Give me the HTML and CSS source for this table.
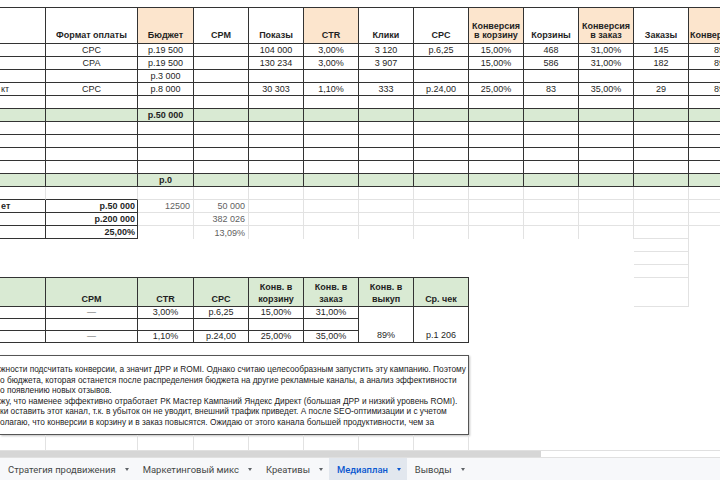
FILE: index.html
```html
<!DOCTYPE html>
<html lang="ru">
<head>
<meta charset="utf-8">
<title>Медиаплан</title>
<link rel="stylesheet" href="styles.css">
</head>
<body>
<div class="sheet">
  <div class="cols t1">
    <div class="c hd"></div>
    <div class="c hd"><span>Формат оплаты</span></div>
    <div class="c hd or"><span>Бюджет</span></div>
    <div class="c hd"><span>CPM</span></div>
    <div class="c hd"><span>Показы</span></div>
    <div class="c hd or"><span>CTR</span></div>
    <div class="c hd"><span>Клики</span></div>
    <div class="c hd"><span>CPC</span></div>
    <div class="c hd or"><span>Конверсия<br>в корзину</span></div>
    <div class="c hd"><span>Корзины</span></div>
    <div class="c hd or"><span>Конверсия<br>в заказ</span></div>
    <div class="c hd"><span>Заказы</span></div>
    <div class="c hd or lt"><span>Конверсия в выкуп</span></div>

    <div class="c"></div><div class="c">CPC</div><div class="c">р.19 500</div><div class="c"></div><div class="c">104 000</div><div class="c">3,00%</div><div class="c">3 120</div><div class="c">р.6,25</div><div class="c">15,00%</div><div class="c">468</div><div class="c">31,00%</div><div class="c">145</div><div class="c p89">89,00%</div>

    <div class="c"></div><div class="c">CPA</div><div class="c">р.19 500</div><div class="c"></div><div class="c">130 234</div><div class="c">3,00%</div><div class="c">3 907</div><div class="c"></div><div class="c">15,00%</div><div class="c">586</div><div class="c">31,00%</div><div class="c">182</div><div class="c p89">89,00%</div>

    <div class="c"></div><div class="c"></div><div class="c">р.3 000</div><div class="c"></div><div class="c"></div><div class="c"></div><div class="c"></div><div class="c"></div><div class="c"></div><div class="c"></div><div class="c"></div><div class="c"></div><div class="c"></div>

    <div class="c lt">кт</div><div class="c">CPC</div><div class="c">р.8 000</div><div class="c"></div><div class="c">30 303</div><div class="c">1,10%</div><div class="c">333</div><div class="c">р.24,00</div><div class="c">25,00%</div><div class="c">83</div><div class="c">35,00%</div><div class="c">29</div><div class="c p89">89,00%</div>

    <div class="c"></div><div class="c"></div><div class="c"></div><div class="c"></div><div class="c"></div><div class="c"></div><div class="c"></div><div class="c"></div><div class="c"></div><div class="c"></div><div class="c"></div><div class="c"></div><div class="c"></div>

    <div class="c gr"></div><div class="c gr"></div><div class="c gr b">р.50 000</div><div class="c gr"></div><div class="c gr"></div><div class="c gr"></div><div class="c gr"></div><div class="c gr"></div><div class="c gr"></div><div class="c gr"></div><div class="c gr"></div><div class="c gr"></div><div class="c gr"></div>

    <div class="c"></div><div class="c"></div><div class="c"></div><div class="c"></div><div class="c"></div><div class="c"></div><div class="c"></div><div class="c"></div><div class="c"></div><div class="c"></div><div class="c"></div><div class="c"></div><div class="c"></div>
    <div class="c"></div><div class="c"></div><div class="c"></div><div class="c"></div><div class="c"></div><div class="c"></div><div class="c"></div><div class="c"></div><div class="c"></div><div class="c"></div><div class="c"></div><div class="c"></div><div class="c"></div>
    <div class="c"></div><div class="c"></div><div class="c"></div><div class="c"></div><div class="c"></div><div class="c"></div><div class="c"></div><div class="c"></div><div class="c"></div><div class="c"></div><div class="c"></div><div class="c"></div><div class="c"></div>
    <div class="c"></div><div class="c"></div><div class="c"></div><div class="c"></div><div class="c"></div><div class="c"></div><div class="c"></div><div class="c"></div><div class="c"></div><div class="c"></div><div class="c"></div><div class="c"></div><div class="c"></div>

    <div class="c gr"></div><div class="c gr"></div><div class="c gr b">р.0</div><div class="c gr"></div><div class="c gr"></div><div class="c gr"></div><div class="c gr"></div><div class="c gr"></div><div class="c gr"></div><div class="c gr"></div><div class="c gr"></div><div class="c gr"></div><div class="c gr"></div>
  </div>

  <div class="cols zb">
    <!-- R1 -->
    <div class="g db"></div><div class="g db"></div><div class="g"></div><div class="g"></div><div class="g"></div><div class="g"></div><div class="g"></div><div class="g"></div><div class="g"></div><div class="g"></div><div class="g"></div><div class="g"></div><div class="g"></div>
    <!-- R2 -->
    <div class="c lt b">ет</div><div class="c rt b">р.50 000</div><div class="g rt gy">12500</div><div class="g rt gy">50 000</div><div class="g"></div><div class="g"></div><div class="g"></div><div class="g"></div><div class="g"></div><div class="g"></div><div class="g"></div><div class="g"></div><div class="g"></div>
    <!-- R3 -->
    <div class="c"></div><div class="c rt b">р.200 000</div><div class="g"></div><div class="g rt gy">382 026</div><div class="g"></div><div class="g"></div><div class="g"></div><div class="g"></div><div class="g"></div><div class="g"></div><div class="g"></div><div class="g"></div><div class="g"></div>
    <!-- R4 -->
    <div class="c"></div><div class="c rt b">25,00%</div><div class="gv"></div><div class="gv rt gy">13,09%</div><div class="gv"></div><div class="gv"></div><div class="gv"></div><div class="gv"></div><div class="gv"></div><div class="gv"></div><div class="gv"></div><div class="g"></div><div class="gv"></div>
    <!-- R5 -->
    <div></div><div></div><div></div><div></div><div></div><div></div><div></div><div></div><div></div><div></div><div></div><div class="g"></div><div></div>
    <!-- R6 -->
    <div></div><div></div><div></div><div></div><div></div><div></div><div></div><div></div><div></div><div></div><div></div><div class="g"></div><div></div>
    <!-- R7 -->
    <div class="tb"></div><div class="tb"></div><div class="tb"></div><div class="tb"></div><div class="tb"></div><div class="tb"></div><div class="tb"></div><div class="tb"></div><div></div><div></div><div></div><div class="g"></div><div></div>
    <!-- R8: table 2 header -->
    <div class="c hd2 gr"></div>
    <div class="c hd2 gr"><span>CPM</span></div>
    <div class="c hd2 gr"><span>CTR</span></div>
    <div class="c hd2 gr"><span>CPC</span></div>
    <div class="c hd2 gr"><span>Конв. в<br>корзину</span></div>
    <div class="c hd2 gr"><span>Конв. в<br>заказ</span></div>
    <div class="c hd2 gr"><span>Конв. в<br>выкуп</span></div>
    <div class="c hd2 gr"><span>Ср. чек</span></div>
    <div></div><div></div><div></div><div class="g"></div><div></div>
    <!-- R9 -->
    <div class="c"></div><div class="c gy">—</div><div class="c">3,00%</div><div class="c">р.6,25</div><div class="c">15,00%</div><div class="c">31,00%</div>
    <div class="c mg">89%</div><div class="c mg">р.1 206</div>
    <div></div><div></div><div></div><div></div><div></div>
    <!-- R10 -->
    <div class="c"></div><div class="c"></div><div class="c"></div><div class="c"></div><div class="c"></div><div class="c"></div>
    <div></div><div></div><div></div><div></div><div></div>
    <!-- R11 -->
    <div class="c"></div><div class="c gy">—</div><div class="c">1,10%</div><div class="c">р.24,00</div><div class="c">25,00%</div><div class="c">35,00%</div>
    <div></div><div></div><div></div><div></div><div></div>
  </div>

  <div class="note">
    <div class="ln">жности подсчитать конверсии, а значит ДРР и ROMI. Однако считаю целесообразным запустить эту кампанию. Поэтому</div>
    <div class="ln">о бюджета, которая останется после распределения бюджета на другие рекламные каналы, а анализ эффективности</div>
    <div class="ln">о появлению новых отзывов.</div>
    <div class="ln">жу, что наменее эффективно отработает РК Мастер Кампаний Яндекс Директ (большая ДРР и низкий уровень ROMI).</div>
    <div class="ln">ки оставить этот канал, т.к. в убыток он не уводит, внешний трафик приведет. А после SEO-оптимизации и с учетом</div>
    <div class="ln">олагаю, что конверсии в корзину и в заказ повысятся. Ожидаю от этого канала большей продуктивности, чем за</div>
  </div>

  <div class="cols zc">
    <div class="gv"></div><div class="gv"></div><div class="gv"></div><div class="gv"></div><div class="gv"></div><div class="gv"></div><div class="gv"></div><div class="gv"></div>
  </div>
</div>

<div class="hscroll"><div class="thumb"></div></div>

<div class="tabs">
  <div class="tab">Стратегия продвижения<i class="caret"></i></div>
  <div class="tab">Маркетинговый микс<i class="caret"></i></div>
  <div class="tab">Креативы<i class="caret"></i></div>
  <div class="tab on">Медиаплан<i class="caret"></i></div>
  <div class="tab">Выводы<i class="caret"></i></div>
</div>
</body>
</html>
```

FILE: styles.css
```css
* { box-sizing: border-box; margin: 0; padding: 0; }
html, body { width: 720px; height: 480px; overflow: hidden; background: #fff; }
body { font-family: "Liberation Sans", Arial, sans-serif; color: #1f1f1f; }

.sheet { width: 720px; height: 450px; overflow: hidden; }

.cols {
  display: grid;
  grid-template-columns: 46px 92px 56px repeat(9, 55px) 70px;
  width: 758px;
}

.t1 {
  margin-top: 7px;
  border-top: 1px solid #333;
  grid-template-rows: 36px repeat(11, 13px);
}

.c {
  border-right: 1px solid #333;
  border-bottom: 1px solid #333;
  display: flex;
  align-items: center;
  justify-content: center;
  text-align: center;
  font-size: 9px;
  line-height: 11px;
  white-space: nowrap;
  overflow: hidden;
}

.hd { font-weight: bold; align-items: flex-end; line-height: 9.6px; padding-bottom: 2px; }
.hd2 { font-weight: bold; align-items: flex-end; line-height: 12px; padding-bottom: 1px; }
.or { background: #fce5cd; }
.gr { background: #d9ead3; }
.b { font-weight: bold; }
.lt { justify-content: flex-start; text-align: left; padding-left: 1px; }
.rt { justify-content: flex-end; padding-right: 2px; }
.p89 { justify-content: flex-start; padding-left: 25px; }
.gy { color: #5f5f5f; }

.zb { grid-template-rows: repeat(7, 13px) 29px repeat(3, 12px); }

.g {
  border-right: 1px solid #e2e2e2;
  border-bottom: 1px solid #e2e2e2;
  display: flex;
  align-items: center;
  font-size: 9px;
  white-space: nowrap;
}
.gv { border-right: 1px solid #e2e2e2; display: flex; align-items: center; font-size: 9px; }
.g.rt, .gv.rt { justify-content: flex-end; padding-right: 3px; }
.db { border-bottom-color: #333; }
.tb { border-bottom: 1px solid #333; }
.mg { grid-row: span 3; align-items: flex-end; padding-bottom: 1px; }

.note {
  margin-top: 12px;
  width: 469px;
  height: 80px;
  border-top: 1px solid #555;
  border-right: 1px solid #555;
  border-bottom: 1px solid #555;
  box-shadow: 1px 1px 2px rgba(0, 0, 0, 0.25);
  padding-top: 8px;
  font-size: 8.3px;
  line-height: 10.5px;
  color: #222;
}
.ln { white-space: nowrap; overflow: hidden; }

.zc { grid-template-rows: 15px; }

.hscroll {
  height: 8px;
  border-top: 1px solid #e0e0e0;
  border-bottom: 1px solid #e0e0e0;
  background: #fff;
}
.thumb { width: 541px; height: 6px; background: #d6d6d6; }

.tabs {
  height: 22px;
  background: #f7f8fa;
  display: flex;
  font-family: Roboto, "Noto Sans", sans-serif;
  font-size: 9.45px;
  color: #444746;
}
.tab { display: flex; align-items: center; padding: 0 6px 0 8px; white-space: nowrap; }
.tab.on { background: #e2e7ee; color: #0b57d0; font-weight: 500; }
.caret {
  margin-left: 9px;
  width: 0;
  height: 0;
  border-left: 2.5px solid transparent;
  border-right: 2.5px solid transparent;
  border-top: 3px solid #5f6368;
}
.tab.on .caret { border-top-color: #0b57d0; }
```
